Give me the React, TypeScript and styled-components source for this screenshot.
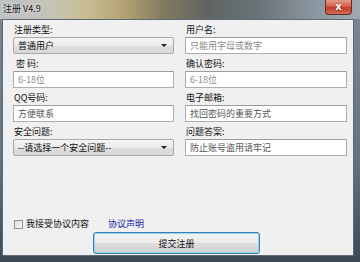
import React from "react";
import styled, { createGlobalStyle } from "styled-components";

const GlobalStyle = createGlobalStyle`
  html, body {
    margin: 0;
    padding: 0;
    background: #3a4550;
  }
  * {
    box-sizing: border-box;
  }
`;

const FONT = `"Noto Sans CJK SC", "Liberation Sans", sans-serif`;

const Window = styled("div")`
  width: 360px;
  height: 262px;
  display: flex;
  flex-direction: column;
  background: linear-gradient(180deg, #7d8892 0%, #66727c 60%, #3d4954 100%);
  font-family: ${FONT};
  overflow: hidden;
`;

const TitleBar = styled("div")`
  height: 19px;
  flex: none;
  display: flex;
  align-items: flex-start;
  background: linear-gradient(
    90deg,
    #bcc2c7 0%,
    #c4c3b6 14%,
    #c9bd93 24%,
    #b4a474 34%,
    #7f7960 46%,
    #5f6463 58%,
    #6a7379 72%,
    #8c98a2 88%,
    #9ea9b2 100%
  );
`;

const Title = styled("span")`
  margin: 3px 0 0 3px;
  font-size: 9px;
  line-height: 11px;
  color: #1e1e1e;
  text-shadow: 0 0 4px rgba(255, 255, 255, 0.8);
`;

const CloseButton = styled("div")`
  margin-left: auto;
  margin-right: 8px;
  width: 27px;
  height: 15px;
  display: flex;
  align-items: center;
  justify-content: center;
  border: 1px solid #6a2a22;
  border-top: none;
  border-radius: 0 0 4px 4px;
  background: linear-gradient(180deg, #e59a8a 0%, #d4604c 45%, #c03a26 55%, #d2705a 100%);
  color: #fff;
  font-family: "DejaVu Sans", sans-serif;
  font-weight: bold;
  font-size: 10px;
  line-height: 10px;
  text-shadow: 0 0 2px #5a1a10;
`;

const Client = styled("div")`
  flex: 1;
  margin: 0 6px 6px 2px;
  border: 1px solid #5e6b76;
  background: #f0f0f0;
  display: flex;
  flex-direction: column;
  padding: 4px 6px 1px 10px;
`;

const FormGrid = styled("div")`
  display: grid;
  grid-template-columns: 161px 162px;
  column-gap: 11px;
  row-gap: 4px;
`;

const Group = styled("div")`
  display: flex;
  flex-direction: column;
`;

const Label = styled("label")`
  height: 12px;
  margin-bottom: 1px;
  padding-left: 1px;
  font-size: 9px;
  line-height: 12px;
  color: #111;
  white-space: pre;
`;

const Input = styled("div")`
  height: 17px;
  border: 1px solid #abadb3;
  border-top-color: #9a9ca3;
  background: #fff;
  padding-left: 4px;
  font-size: 9px;
  line-height: 15px;
  color: ${(p: { $muted?: boolean }) => (p.$muted ? "#8a8a8a" : "#555")};
`;

const Select = styled("div")`
  height: 17px;
  border: 1px solid #a8a8a8;
  border-radius: 2px;
  background: linear-gradient(180deg, #f4f4f4 0%, #ebebeb 50%, #dedede 51%, #d8d8d8 100%);
  padding: 0 6px 0 4px;
  display: flex;
  align-items: center;
  justify-content: space-between;
  font-size: 9px;
  line-height: 15px;
  color: #111;
`;

const Arrow = styled("span")`
  width: 0;
  height: 0;
  border-left: 3px solid transparent;
  border-right: 3px solid transparent;
  border-top: 3px solid #222;
`;

const Footer = styled("div")`
  margin-top: auto;
  display: flex;
  flex-direction: column;
`;

const AgreeRow = styled("div")`
  display: flex;
  align-items: center;
  height: 12px;
  font-size: 9px;
  line-height: 12px;
  color: #111;
`;

const CheckBox = styled("span")`
  width: 9px;
  height: 9px;
  border: 1px solid #8f8f8f;
  background: linear-gradient(135deg, #dcdcdc 0%, #fbfbfb 100%);
  margin: 0 3px 0 1px;
`;

const Link = styled("a")`
  margin-left: 19px;
  color: #1a1aa6;
  text-decoration: none;
`;

const SubmitButton = styled("button")`
  margin: 2px 0 0 80px;
  width: 167px;
  height: 22px;
  border: 1px solid #3c7fb1;
  border-radius: 3px;
  box-shadow: inset 0 0 0 1px #8fd3ee;
  background: linear-gradient(180deg, #f4f4f4 0%, #ececec 48%, #dddddd 52%, #d2d2d2 100%);
  font-family: ${FONT};
  font-size: 9px;
  color: #111;
  padding: 0;
`;

type FieldProps = {
  label: string;
  value: string;
  muted?: boolean;
  select?: boolean;
};

const Field = ({ label, value, muted, select }: FieldProps) => (
  <Group>
    <Label>{label}</Label>
    {select ? (
      <Select>
        {value}
        <Arrow />
      </Select>
    ) : (
      <Input $muted={muted}>{value}</Input>
    )}
  </Group>
);

const fields: FieldProps[] = [
  { label: "注册类型:", value: "普通用户", select: true },
  { label: "用户名:", value: "只能用字母或数字", muted: true },
  { label: " 密 码:", value: "6-18位", muted: true },
  { label: "确认密码:", value: "6-18位", muted: true },
  { label: "QQ号码:", value: "方便联系" },
  { label: "电子邮箱:", value: "找回密码的重要方式" },
  { label: "安全问题:", value: "--请选择一个安全问题--", select: true },
  { label: "问题答案:", value: "防止账号盗用请牢记" },
];

const App = () => (
  <>
    <GlobalStyle />
    <Window>
      <TitleBar>
        <Title>注册 V4.9</Title>
        <CloseButton>x</CloseButton>
      </TitleBar>
      <Client>
        <FormGrid>
          {fields.map((f) => (
            <Field key={f.label} {...f} />
          ))}
        </FormGrid>
        <Footer>
          <AgreeRow>
            <CheckBox />
            我接受协议内容
            <Link href="#">协议声明</Link>
          </AgreeRow>
          <SubmitButton>提交注册</SubmitButton>
        </Footer>
      </Client>
    </Window>
  </>
);

export default App;
